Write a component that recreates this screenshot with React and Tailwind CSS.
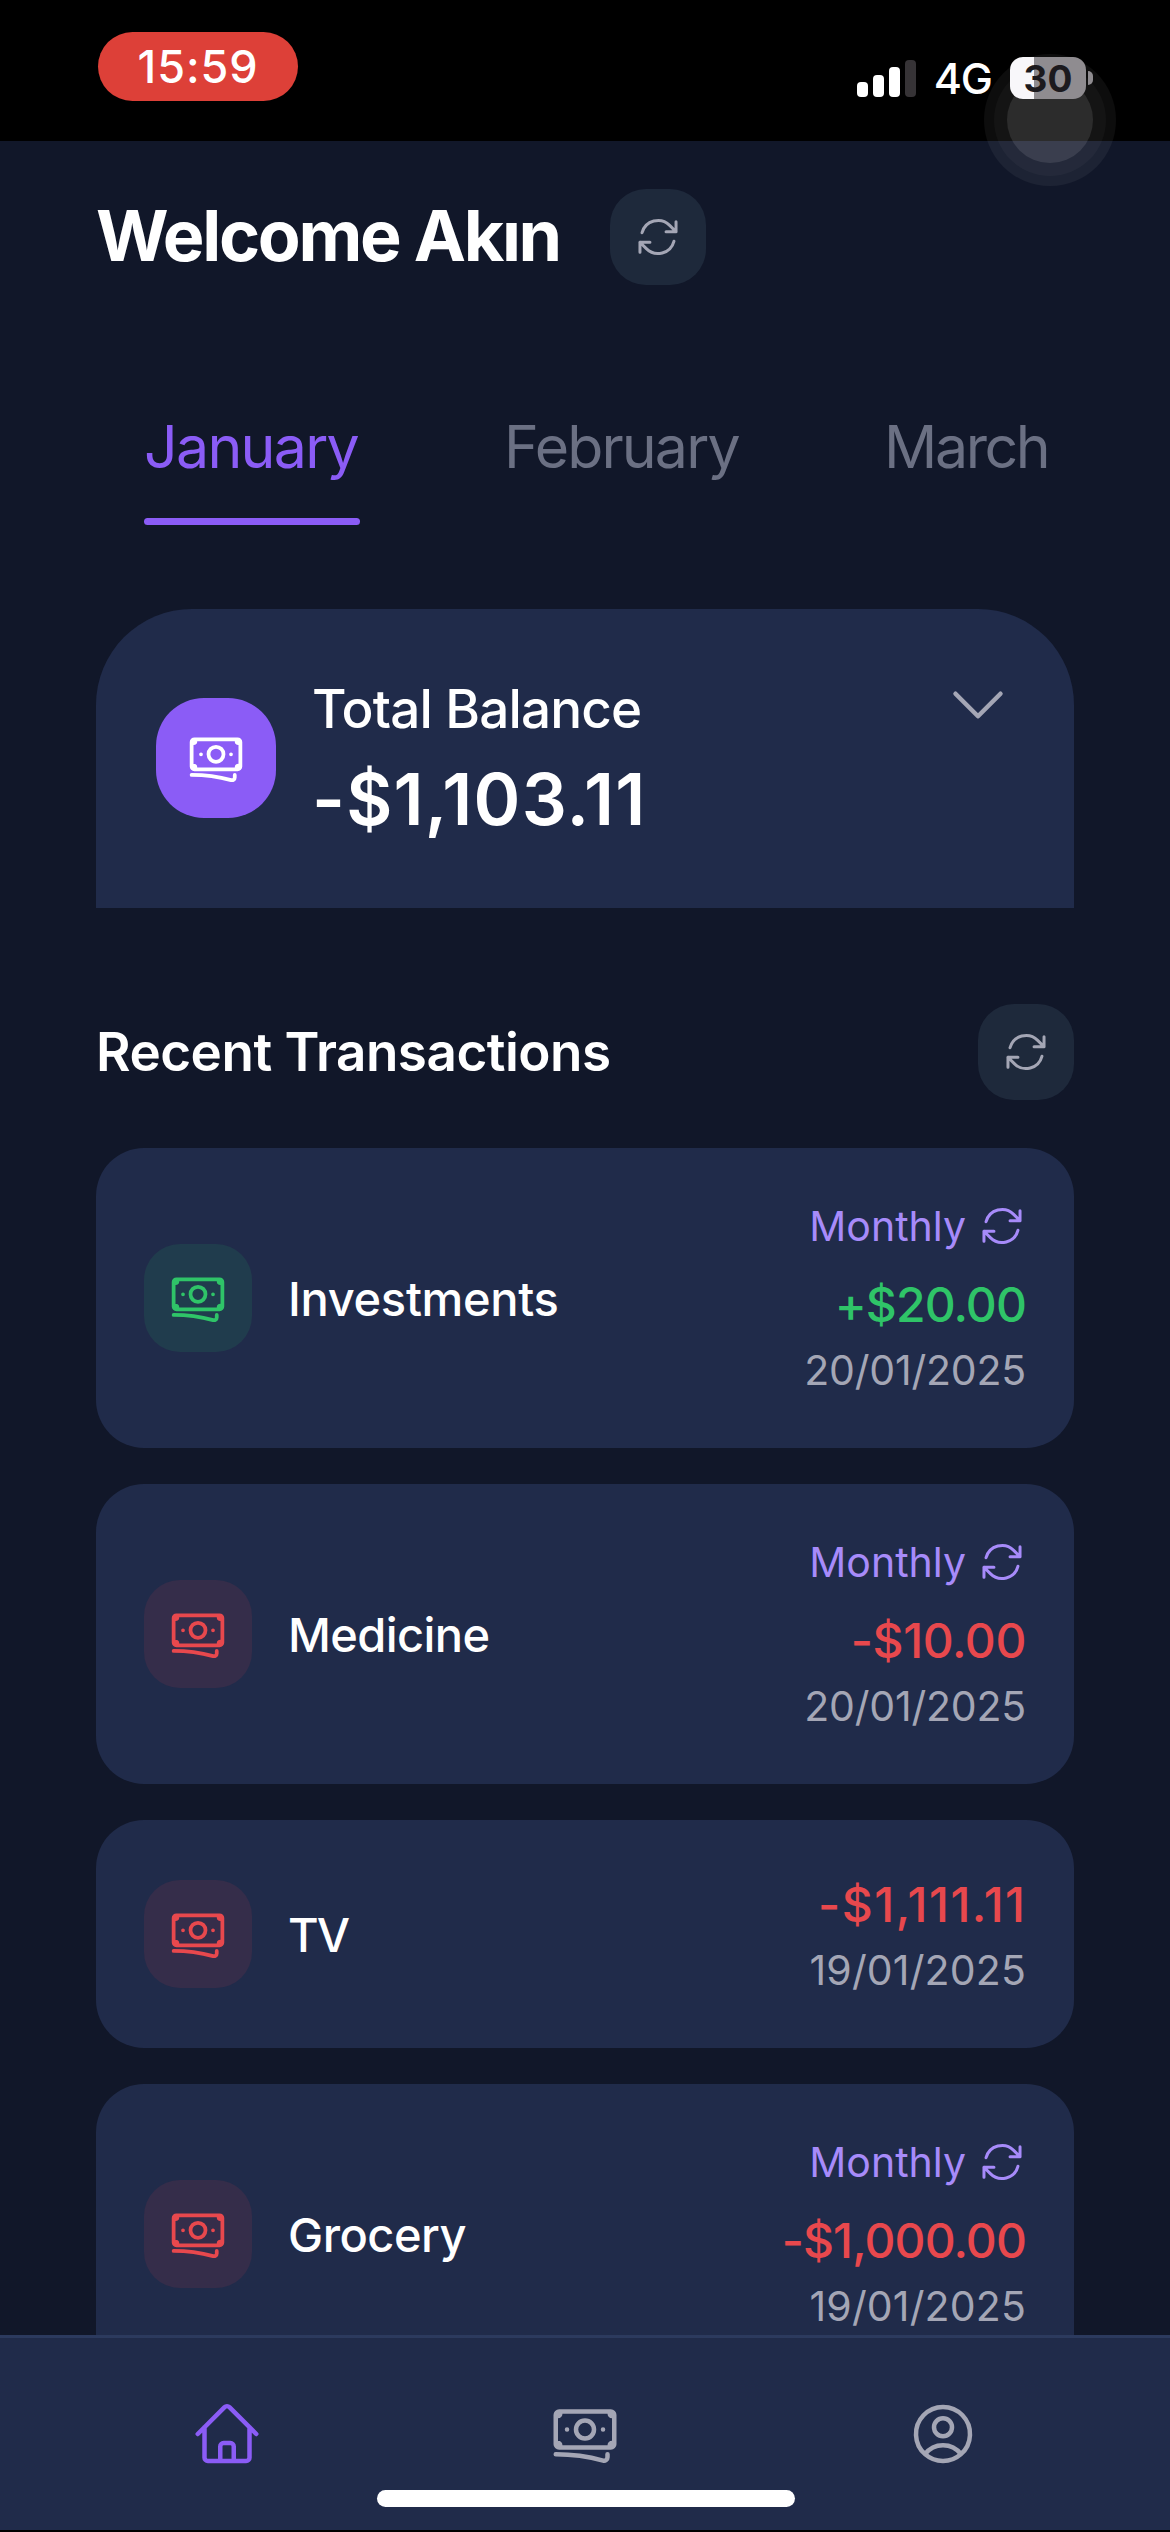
import {
  HiOutlineArrowPath,
  HiOutlineBanknotes,
  HiOutlineChevronDown,
  HiOutlineHome,
  HiOutlineUserCircle,
} from 'react-icons/hi2';

const TABS = [
  { name: 'January', active: true, spacing: 'tracking-[-1.7px]', width: 'w-[216px]' },
  { name: 'February', active: false, spacing: 'tracking-[-1.85px]', width: 'w-[236px]' },
  { name: 'March', active: false, spacing: 'tracking-[-2.4px]', width: 'w-[164px]' },
];

const TRANSACTIONS = [
  { title: 'Investments', titleSpacing: 'tracking-[-0.3px]', amount: '+$20.00', amountSpacing: 'tracking-[-0.9px]', income: true, monthly: true, date: '20/01/2025', dateSpacing: 'tracking-[-0.2px]' },
  { title: 'Medicine', titleSpacing: 'tracking-[-0.6px]', amount: '-$10.00', amountSpacing: 'tracking-[-0.4px]', income: false, monthly: true, date: '20/01/2025', dateSpacing: 'tracking-[-0.2px]' },
  { title: 'TV', titleSpacing: 'tracking-[-2px]', amount: '-$1,111.11', amountSpacing: 'tracking-[1.5px] mr-[-0.5px]', income: false, monthly: false, date: '19/01/2025', dateSpacing: 'tracking-[0.15px]' },
  { title: 'Grocery', titleSpacing: 'tracking-[-0.5px]', amount: '-$1,000.00', amountSpacing: 'tracking-[-0.9px]', income: false, monthly: true, date: '19/01/2025', dateSpacing: 'tracking-[0.15px]' },
];

function SignalBars() {
  return (
    <div className="flex items-end gap-[5px]">
      <div className="h-[15px] w-[11px] rounded-[4px] bg-white" />
      <div className="h-[22px] w-[11px] rounded-[4px] bg-white" />
      <div className="h-[30px] w-[11px] rounded-[4px] bg-white" />
      <div className="h-[37px] w-[11px] rounded-[4px] bg-[#363336]" />
    </div>
  );
}

function Battery() {
  return (
    <div className="flex items-center gap-[2px]">
      <div className="flex h-[42px] w-[76px] items-center justify-center rounded-[13px] bg-[linear-gradient(to_right,#f8f7fa_24px,#8f8c90_24px)] text-[37px] leading-none font-bold text-[#1c1a1e]">
        30
      </div>
      <div className="h-[14px] w-[5px] rounded-r-full bg-[#8f8c90]" />
    </div>
  );
}

function StatusBar() {
  return (
    <header className="relative flex h-[141px] shrink-0 items-start justify-between bg-black pr-[77px] pl-[98px]">
      <div className="mt-[32px] flex h-[69px] w-[200px] items-center justify-center rounded-full bg-[#dd4038] text-[45px] leading-none font-medium tracking-[0.9px] text-white">
        15:59
      </div>
      <div className="z-10 mt-[57px] flex h-[42px] items-center">
        <SignalBars />
        <span className="mr-[18px] ml-[18px] text-[43px] leading-none font-medium tracking-[-1px] text-white">4G</span>
        <Battery />
      </div>
      <div className="absolute top-[54px] right-[54px] flex size-[132px] items-center justify-center rounded-full bg-white/5">
        <div className="flex size-[112px] items-center justify-center rounded-full bg-white/[0.03]">
          <div className="size-[86px] rounded-full bg-white/10" />
        </div>
      </div>
    </header>
  );
}

function RefreshButton() {
  return (
    <button className="flex size-[96px] items-center justify-center rounded-[36px] bg-[#1e293b]">
      <HiOutlineArrowPath className="size-[48px] text-[#a4a6b5]" />
    </button>
  );
}

function MonthTabs() {
  return (
    <nav className="mt-[108px] flex gap-[144px] px-[144px]">
      {TABS.map((tab) => (
        <div
          key={tab.name}
          className={`flex h-[132px] shrink-0 flex-col justify-between pt-[18px] ${tab.width} ${tab.active ? 'text-[#8b5cf6]' : 'text-[#6b7083]'}`}
        >
          <span className={`text-[59px] leading-[72px] whitespace-nowrap ${tab.spacing}`}>{tab.name}</span>
          {tab.active && <div className="h-[7px] rounded-full bg-[#8b5cf6]" />}
        </div>
      ))}
    </nav>
  );
}

function BalanceCard() {
  return (
    <section className="mx-[96px] mt-[84px] flex h-[299px] shrink-0 items-start rounded-t-[96px] bg-[#202b4a] p-[60px]">
      <div className="mt-[29px] flex size-[120px] items-center justify-center rounded-[48px] bg-[#8b5cf6]">
        <HiOutlineBanknotes className="size-[60px] text-white" />
      </div>
      <div className="ml-[36px] flex-1 text-white">
        <div className="text-[53px] leading-[80px] font-medium tracking-[-0.85px]">Total Balance</div>
        <div className="text-[71px] leading-[101px] font-semibold tracking-[1.2px]">-$1,103.11</div>
      </div>
      <HiOutlineChevronDown className="size-[72px] text-[#a4a6b5]" />
    </section>
  );
}

function TransactionCard({ item }) {
  return (
    <li className="flex shrink-0 items-center rounded-[48px] bg-[#202b4a] p-[48px]">
      <div className={`flex size-[108px] items-center justify-center rounded-[36px] ${item.income ? 'bg-[#203c4d] text-[#2fc468]' : 'bg-[#352d4a] text-[#e8484d]'}`}>
        <HiOutlineBanknotes className="size-[60px]" />
      </div>
      <span className={`mt-[2px] ml-[36px] flex-1 text-[47px] leading-[72px] font-medium text-white ${item.titleSpacing}`}>{item.title}</span>
      <div className="flex flex-col items-end">
        {item.monthly && (
          <div className="mb-[12px] flex h-[60px] items-center gap-[12px] text-[#a78bfa]">
            <span className="text-[41px] leading-[60px]">Monthly</span>
            <HiOutlineArrowPath className="size-[48px]" />
          </div>
        )}
        <span className={`pt-[2px] text-[48px] leading-[70px] font-medium ${item.amountSpacing} ${item.income ? 'text-[#2fc468]' : 'text-[#e8484d]'}`}>
          {item.amount}
        </span>
        <span className={`text-[41px] leading-[60px] text-[#a4a6b5] ${item.dateSpacing}`}>{item.date}</span>
      </div>
    </li>
  );
}

function TabBar() {
  return (
    <footer className="relative flex h-[195px] shrink-0 justify-around border-t-[3px] border-[#2c3a5e] bg-[#202b4a] px-[48px] pt-[60px] text-[#a4a6b5]">
      <HiOutlineHome className="size-[72px] text-[#8b5cf6]" />
      <HiOutlineBanknotes className="size-[72px]" />
      <HiOutlineUserCircle className="size-[72px]" />
      <div className="absolute bottom-[23px] left-[377px] h-[17px] w-[418px] rounded-full bg-white" />
    </footer>
  );
}

export default function App() {
  return (
    <div className="flex h-[2532px] w-[1170px] flex-col overflow-hidden bg-black pb-[2px] font-['Inter',sans-serif]">
      <StatusBar />
      <main className="flex min-h-0 flex-1 flex-col overflow-hidden bg-[#111729]">
        <div className="mt-[48px] flex items-center gap-[48px] px-[96px]">
          <h1 className="mt-[-3px] w-[466px] text-[70px] leading-[96px] font-bold tracking-[-2.3px] whitespace-nowrap text-white">Welcome Akın</h1>
          <RefreshButton />
        </div>
        <MonthTabs />
        <BalanceCard />
        <div className="mx-[96px] mt-[96px] flex items-center justify-between">
          <h2 className="text-[53px] leading-[96px] font-semibold tracking-[-0.5px] text-white">Recent Transactions</h2>
          <RefreshButton />
        </div>
        <ul className="mx-[96px] mt-[48px] flex flex-col gap-[36px]">
          {TRANSACTIONS.map((item) => (
            <TransactionCard key={item.title} item={item} />
          ))}
        </ul>
      </main>
      <TabBar />
    </div>
  );
}
